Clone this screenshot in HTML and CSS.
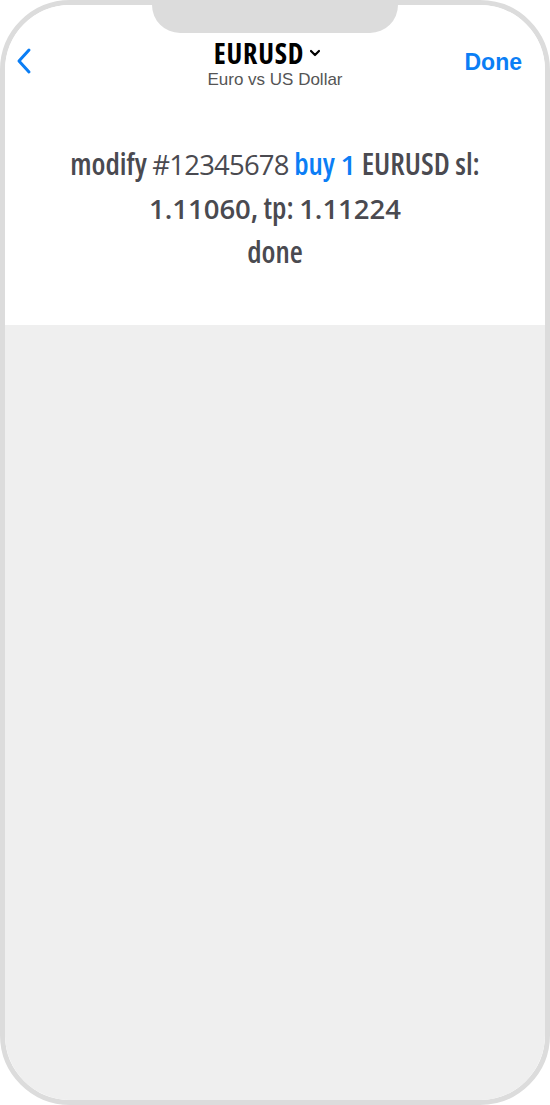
FILE: index.html
```html
<!DOCTYPE html>
<html lang="en">

<head>
    <meta charset="UTF-8">
    <meta name="viewport" content="width=device-width, initial-scale=1.0">
    <title>EURUSD</title>
    <link rel="stylesheet" href="styles.css">
</head>

<body>
    <div class="phone">
        <div class="notch"></div>

        <div class="top">
            <div class="nav">
                <a class="back" href="#">
                    <svg width="16" height="28" viewBox="0 0 16 28">
                        <path d="M13 3 L3 14 L13 25" fill="none" stroke="currentColor" stroke-width="3" stroke-linecap="round" stroke-linejoin="round"/>
                    </svg>
                </a>
                <div class="title">
                    <div class="symbol">
                        EURUSD
                        <svg width="12" height="8" viewBox="0 0 12 8">
                            <path d="M2 2 L6 6 L10 2" fill="none" stroke="#000" stroke-width="2.2" stroke-linecap="round" stroke-linejoin="round"/>
                        </svg>
                    </div>
                    <div class="desc">Euro vs US Dollar</div>
                </div>
                <a class="done" href="#">Done</a>
            </div>

            <p class="message">
                modify <span class="ticket num">#12345678</span> <span class="buy">buy <span class="num">1</span></span> EURUSD sl:<br>
                <span class="num">1.11060</span>, tp: <span class="num">1.11224</span><br>
                done
            </p>
        </div>

        <div class="rest"></div>
    </div>
</body>

</html>
```

FILE: styles.css
```css
* {
    box-sizing: border-box;
}

body {
    margin: 0;
    font-family: 'Liberation Sans', Arial, sans-serif;
    background: #fff;
}

.phone {
    position: relative;
    width: 550px;
    height: 1105px;
    border: 5px solid #dcdcdc;
    border-radius: 70px;
    overflow: hidden;
    display: flex;
    flex-direction: column;
    background: #fff;
}

.notch {
    position: absolute;
    top: -5px;
    left: 50%;
    transform: translateX(-50%);
    width: 246px;
    height: 33px;
    background: #dcdcdc;
    border-radius: 0 0 28px 28px;
}

.top {
    height: 320px;
    background: #fff;
}

.nav {
    display: grid;
    grid-template-columns: 1fr auto 1fr;
    align-items: start;
    padding: 33px 23px 0 11px;
}

.back {
    color: #0b7ef5;
    margin-top: 9px;
    justify-self: start;
    display: block;
}

.title {
    text-align: center;
    padding-left: 12px;
}

.symbol {
    font-family: 'Open Sans', sans-serif;
    font-stretch: 75%;
    font-weight: 700;
    font-size: 28px;
    letter-spacing: 0.8px;
    line-height: 30px;
    color: #000;
    display: flex;
    align-items: center;
    justify-content: center;
    gap: 5px;
    margin-right: 15px;
}

.desc {
    font-size: 17px;
    line-height: 20px;
    color: #555;
    margin-top: 2px;
}

.done {
    justify-self: end;
    color: #0b7ef5;
    text-decoration: none;
    font-size: 23px;
    font-weight: bold;
    margin-top: 11px;
}

.message {
    margin: 52px 0 0;
    text-align: center;
    font-family: 'Open Sans', sans-serif;
    font-stretch: 75%;
    font-weight: 600;
    font-size: 30px;
    line-height: 43px;
    color: #4a4a50;
}

.num {
    font-stretch: 100%;
    font-size: 27.5px;
}

.ticket {
    font-weight: 400;
    letter-spacing: -0.8px;
}

.buy {
    color: #0b7ef5;
}

.rest {
    flex: 1;
    background: #efefef;
}
```
